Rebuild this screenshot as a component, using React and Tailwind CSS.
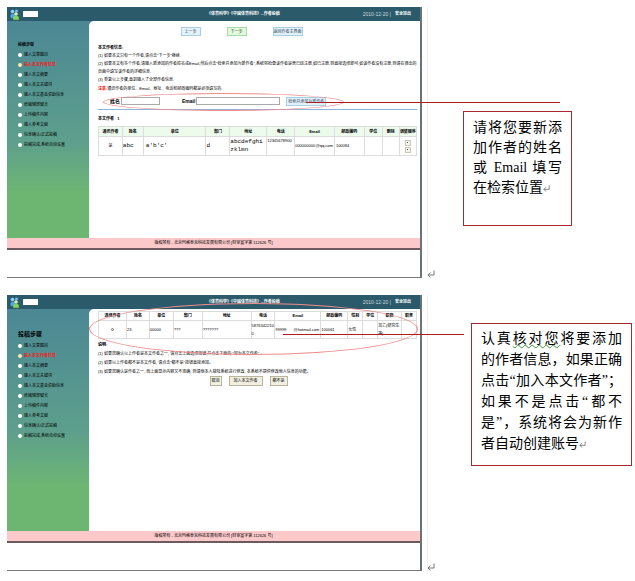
import React from "react";

const STEPS = [
  "输入文章题目",
  "输入本文作者信息",
  "输入本文摘要",
  "输入本文关键词",
  "输入本文基金资助信息",
  "给编辑部留言",
  "上传稿件内容",
  "输入参考文献",
  "信息确认/正式投稿",
  "投稿完成,系统自动设置",
];

function PeopleIcon() {
  return (
    <svg viewBox="0 0 18 22" className="h-[11px] w-[9px] shrink-0" aria-hidden="true">
      <circle cx="5" cy="5" r="3.6" fill="#8fd0f2" />
      <path d="M1 17c0-6 1-8 4-8s5 2 5 8c-2 2-7 2-9 0z" fill="#4fa6e0" />
      <circle cx="13" cy="4" r="3.2" fill="#6db7ea" />
      <circle cx="12" cy="10" r="3.6" fill="#d5f2a8" />
      <path d="M6 21c0-6 2-8 6-8s6 2 6 8c-2 1-10 1-12 0z" fill="#86cf5a" />
    </svg>
  );
}

function ReturnMark({ className }) {
  return (
    <svg viewBox="0 0 8 8" className={className} fill="none" stroke="#777" strokeWidth="1" aria-hidden="true">
      <path d="M7 0.500V5H1M3.500 2.500L1 5l2.500 2.500" />
    </svg>
  );
}

function Sidebar({ name, title }) {
  return (
    <nav className="w-[82px] shrink-0 pl-[11px]">
      {title}
      <ul>
        {STEPS.map((step, i) => (
          <li key={step} className="h-[10px]">
            <label className={"flex h-[10px] items-center gap-[2px] whitespace-nowrap " + (i === 1 ? "font-bold text-[#f0201c]" : "text-black")}>
              <input
                type="radio"
                name={name}
                defaultChecked={i === 1}
                className="size-[4px] shrink-0 appearance-none rounded-full border-0 bg-white checked:bg-[#ffe3b0]"
              />
              {step}
            </label>
          </li>
        ))}
      </ul>
    </nav>
  );
}

function Screen({ name, title, bodyClass, children }) {
  return (
    <div className="relative min-w-0 flex-1 border-r-2 border-b border-r-[#6b7376] border-b-[#777] pb-[27px] text-[4px] leading-[8px]">
      <header className="flex h-[14px] items-center bg-[#2b5a6b] text-white">
        <div className="flex flex-[3] items-center gap-1 pl-[3px]">
          <PeopleIcon />
          <span className="h-[6px] w-[15px] bg-white" />
        </div>
        <h1 className="font-bold">《体育科学》《中国体育科技》--作者投稿</h1>
        <div className="flex flex-[2] items-center justify-end gap-1 pr-[9px]">
          <span className="text-[5px] text-[#c6d8de]">2010-12-20 |</span>
          <a href="#logout" className="font-bold">安全退出</a>
        </div>
      </header>
      <div className={"flex bg-linear-to-b from-[#4b8794] via-[#5d9f8c] via-55% to-[#6db672] to-80% " + bodyClass}>
        <Sidebar name={name} title={title} />
        <div className="min-w-0 flex-1 rounded-tl-[5px] bg-white pr-[3px] pl-[9px] text-black">{children}</div>
      </div>
      <footer className="h-[12px] border-b-2 border-[#6d5a5e] bg-[#fcc9cb] text-center leading-[10px] text-black">
        版权所有 - 北京玛格泰克科技发展有限公司 [财审宣字第 112626 号]
      </footer>
    </div>
  );
}

const CELL = "border border-[#dcdcdc] p-0 ";
const MONO = "text-[6px] [font-family:'Liberation_Mono',monospace]";

function Columns({ widths }) {
  return (
    <colgroup>
      {widths.map((w, i) => (
        <col key={i} style={{ width: w + "%" }} />
      ))}
    </colgroup>
  );
}

function HeadRow({ labels, className }) {
  return (
    <thead>
      <tr className={className}>
        {labels.map((l) => (
          <th key={l} className={CELL + "text-center font-bold whitespace-nowrap text-black"}>{l}</th>
        ))}
      </tr>
    </thead>
  );
}

function MoveButton({ label }) {
  return (
    <button type="button" aria-label={label} className="flex size-[6px] items-center justify-center border border-[#c9c9b8] bg-[#f2f2e8]">
      <span className="size-px bg-[#555]" />
    </button>
  );
}

function AuthorsTable() {
  return (
    <table className="w-full table-fixed border-collapse">
      <Columns widths={[7.5, 6.6, 19.7, 7.5, 11.6, 8.8, 12.5, 9.4, 5.7, 5.3, 5.4]} />
      <HeadRow
        className="h-[10px] bg-[#ecfbec]"
        labels={["通讯作者", "姓名", "单位", "部门", "地址", "电话", "Email", "邮政编码", "学位", "删除", "调整顺序"]}
      />
      <tbody>
        <tr className="h-[19px]">
          <td className={CELL + "text-center"}>是</td>
          <td className={CELL + MONO}>abc</td>
          <td className={CELL + "pl-[2px] " + MONO}>a'b'c'</td>
          <td className={CELL + MONO}>d</td>
          <td className={CELL + MONO}>abcdefghi<br />zklmn</td>
          <td className={CELL + "align-top"}>12345678900</td>
          <td className={CELL}>
            <span className="flex items-center justify-between pr-px"><span>000000000</span><span>@qq.com</span></span>
          </td>
          <td className={CELL + "pl-px text-[4px]"}>100084</td>
          <td className={CELL} />
          <td className={CELL} />
          <td className={CELL}>
            <span className="flex flex-col items-center gap-px">
              <MoveButton label="上移" />
              <MoveButton label="下移" />
            </span>
          </td>
        </tr>
      </tbody>
    </table>
  );
}

function CandidatesTable() {
  return (
    <table className="w-full table-fixed border-collapse">
      <Columns widths={[8.8, 7.2, 7.5, 9.1, 15.4, 7.5, 14.4, 8.5, 4.7, 4.7, 7.5, 4.7]} />
      <HeadRow
        className="h-[9px]"
        labels={["选择作者", "姓名", "单位", "部门", "地址", "电话", "Email", "邮政编码", "性别", "学位", "职称", "职务"]}
      />
      <tbody>
        <tr className="h-[18px]">
          <td className={CELL + "text-center"}>
            <input type="radio" name="candidate" aria-label="选择作者" defaultChecked className="mx-auto block size-[3px] appearance-none rounded-full border border-[#777] bg-white" />
          </td>
          <td className={CELL}>23</td>
          <td className={CELL}>00000</td>
          <td className={CELL}>???</td>
          <td className={CELL}>???????</td>
          <td className={CELL}>5876342210<br />0</td>
          <td className={CELL}>
            <span className="flex items-center justify-between pr-px"><span>99999</span><span>@hotmail.com</span></span>
          </td>
          <td className={CELL}>100061</td>
          <td className={CELL}>女性</td>
          <td className={CELL} />
          <td className={CELL}>其它(研究生等)</td>
          <td className={CELL} />
        </tr>
      </tbody>
    </table>
  );
}

const BLUE = "h-[9px] border border-[#a9cfe2] bg-[#e2f2fb] leading-[7px] whitespace-nowrap text-[#345] ";
const GREEN = "h-[9px] border border-[#a5dca5] bg-[#e2f9dd] leading-[7px] whitespace-nowrap text-[#253] ";
const GREY = "h-[10px] border border-[#b9b59d] bg-[#f1efe0] leading-[8px] whitespace-nowrap text-black ";
const CALLOUT = "border border-[#a8282e] px-[9px] text-[14px] [font-family:'Liberation_Serif','Noto_Sans_CJK_SC',serif] ";

function Oval({ className }) {
  return <span aria-hidden="true" className={"pointer-events-none absolute rounded-[50%] border border-[#ee8c8c] " + className} />;
}

export default function App() {
  return (
    <main className="flex flex-col gap-[17px] bg-white pt-[7px] pl-[7px] text-black [font-family:'Liberation_Sans','Noto_Sans_CJK_SC',sans-serif]">
      <section className="flex">
        <Screen name="step-a" bodyClass="min-h-[217px]" title={<h2 className="pt-[19px] pb-px leading-[9px] font-bold text-black">投稿步骤</h2>}>
          <div className="flex justify-center gap-[26px] pt-[6px] pr-[32px]">
            <button type="button" className={BLUE + "px-[3px]"}>上一步</button>
            <button type="button" className={GREEN + "px-[3px]"}>下一步</button>
            <button type="button" className={BLUE}>返回作者主界面</button>
          </div>
          <h2 className="pt-[8px] font-bold text-black">本文作者信息:</h2>
          <p>(1) 如果本文只有一个作者,请点击“下一步”继续.</p>
          <p>(2) 如果本文有多个作者,请输入新添加的作者姓名或Email,然后点击“检索并添加为新作者”,系统将检查该作者是否已经注册,如已注册,则直接选择即可;如该作者没有注册,则请在弹出的页面中填写该作者的详细信息.</p>
          <p>(3) 重复以上步骤,直到输入了全部作者信息.</p>
          <p className="leading-[9px]"><b className="text-[#f00]">注意:</b>通讯作者的单位、Email、地址、电话和邮政编码都是必须填写的.</p>
          <form className="relative flex h-[17px] items-center border-b border-[#8fb4dc] pl-[12px]" onSubmit={(e) => e.preventDefault()}>
            <label className="flex items-center gap-px text-[5px] font-bold">
              姓名
              <input type="text" className="h-[8px] w-[39px] border border-[#aaa] bg-white" />
            </label>
            <label className="ml-[22px] flex items-center gap-px text-[5px] font-bold">
              Email
              <input type="text" className="h-[8px] w-[84px] border border-[#aaa] bg-white" />
            </label>
            <button type="button" className={BLUE + "ml-[6px] px-px"}>检索并添加为新作者</button>
            <Oval className="top-0 left-[5px] h-[18px] w-[241px]" />
          </form>
          <h2 className="pt-[5px] pb-[3px] font-bold text-black">本文作者&nbsp;&nbsp; 1</h2>
          <AuthorsTable />
        </Screen>
        <aside className="relative w-[213px] shrink-0 pt-[104px] pl-[41px]">
          <span aria-hidden="true" className="absolute inset-y-0 left-[5px] w-px bg-[#f0f0ec]" />
          <ReturnMark className="absolute bottom-0 left-[5px] size-[8px]" />
          <span aria-hidden="true" className="absolute top-[95px] -left-[116px] h-px w-[254px] bg-[#b01c22]" />
          <div className={CALLOUT + "h-[115px] w-[109px] pt-[6px] leading-[20px]"}>
            <p className="[text-align-last:justify]">请将您要新添</p>
            <p className="[text-align-last:justify]">加作者的姓名</p>
            <p className="[text-align-last:justify]">或 Email 填写</p>
            <p className="whitespace-nowrap">在检索位置<ReturnMark className="inline size-[7px]" /></p>
          </div>
        </aside>
      </section>

      <section className="flex">
        <Screen name="step-b" bodyClass="min-h-[222px]" title={<h2 className="pt-[20px] pb-[2px] text-[6px] leading-[10px] font-bold text-black">投稿步骤</h2>}>
          <div className="pt-[2px]">
            <CandidatesTable />
          </div>
          <Oval className="top-[8px] left-[82px] h-[52px] w-[329px]" />
          <h2 className="pt-px leading-[9px] font-bold text-black">说明:</h2>
          <p className="leading-[9px]">(1) 如果您确认以上作者是本文作者之一, 请点击上面选择按钮,并点击下面的 “加为本文作者” 。</p>
          <p className="leading-[9px]">(2) 如果以上作者都不是本文作者, 请点击“都不是”按钮直接添加。</p>
          <p className="leading-[9px]">(3) 如果您确认是作者之一, 而上面显示内容又不准确, 则请他本人登陆系统进行修改, 本系统不提供修改他人信息的功能。</p>
          <div className="flex justify-center gap-[7px] pr-[18px]">
            <button type="button" className={GREY + "px-px"}>取消</button>
            <button type="button" className={GREY + "px-[4px]"}>加入本文作者</button>
            <button type="button" className={GREY + "px-[2px]"}>都不是</button>
          </div>
        </Screen>
        <aside className="relative w-[213px] shrink-0 pt-[28px] pl-[49px]">
          <span aria-hidden="true" className="absolute inset-y-0 left-[5px] w-px bg-[#f0f0ec]" />
          <ReturnMark className="absolute bottom-0 left-[5px] size-[8px]" />
          <span aria-hidden="true" className="absolute top-[39px] -left-[139px] h-px w-[181px] bg-[#b01c22]" />
          <div className={CALLOUT + "h-[143px] w-[161px] pt-[4px] leading-[21px]"}>
            <p className="[text-align-last:justify]">
              认真<span className="underline decoration-[#3a9a3a] decoration-wavy decoration-1">核对您</span>将要添加
            </p>
            <p className="whitespace-nowrap [text-align-last:justify]">的作者信息，如果正确</p>
            <p className="whitespace-nowrap [text-align-last:justify]">点击“加入本文作者”；</p>
            <p className="whitespace-nowrap [text-align-last:justify]">如果不是点击“都不</p>
            <p className="whitespace-nowrap [text-align-last:justify]">是”，系统将会为新作</p>
            <p className="whitespace-nowrap">者自动创建账号<ReturnMark className="inline size-[7px]" /></p>
          </div>
        </aside>
      </section>
    </main>
  );
}
